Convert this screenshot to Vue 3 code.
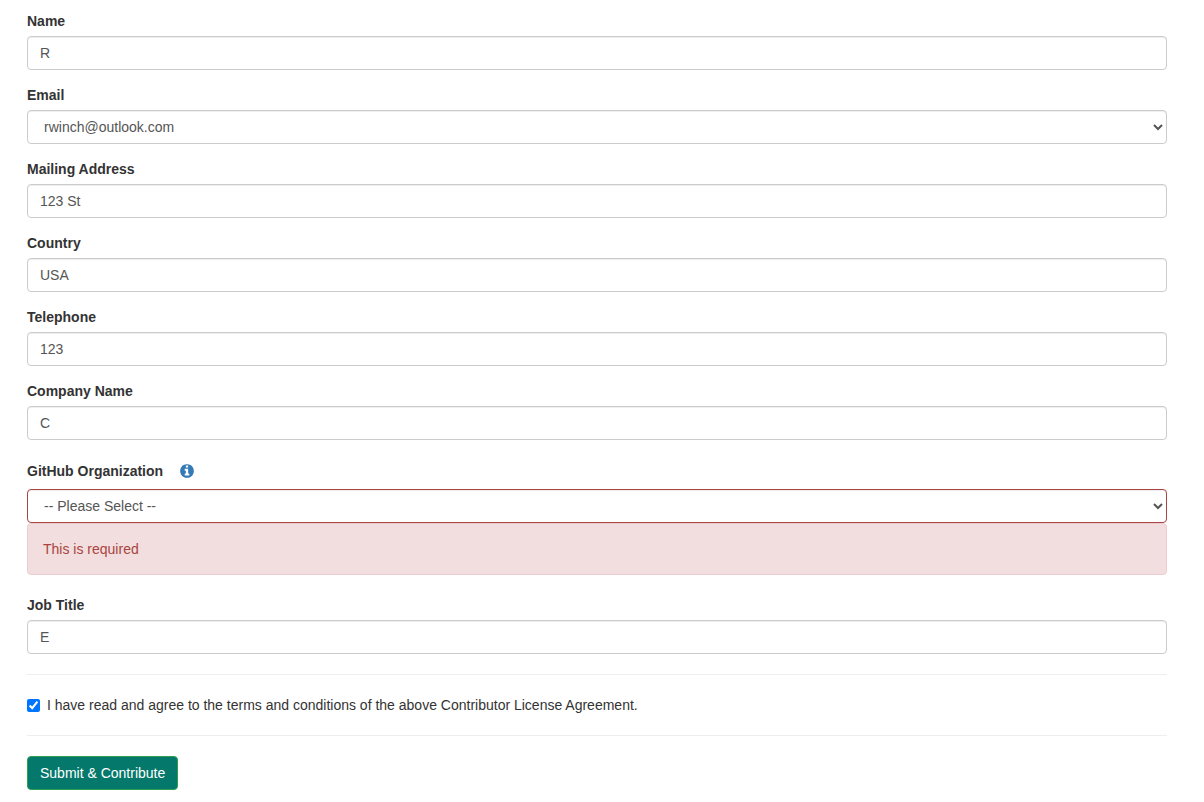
<template>
  <form class="cla-form" @submit.prevent>
    <div v-for="field in topFields" :key="field.label" class="form-group">
      <label class="form-label">{{ field.label }}</label>
      <select v-if="field.options" v-model="field.value" class="form-control">
        <option v-for="opt in field.options" :key="opt">{{ opt }}</option>
      </select>
      <input v-else v-model="field.value" class="form-control" type="text" />
    </div>

    <div class="org-group">
      <label class="form-label org-label">
        GitHub Organization
        <svg class="info-icon" viewBox="0 0 1792 1792" aria-hidden="true">
          <path d="M1152 1376v-160q0-14-9-23t-23-9h-96v-512q0-14-9-23t-23-9h-320q-14 0-23 9t-9 23v160q0 14 9 23t23 9h96v320h-96q-14 0-23 9t-9 23v160q0 14 9 23t23 9h448q14 0 23-9t9-23zm-128-896v-160q0-14-9-23t-23-9h-192q-14 0-23 9t-9 23v160q0 14 9 23t23 9h192q14 0 23-9t9-23zm640 416q0 209-103 385.500t-279.500 279.500-385.500 103-385.500-103-279.500-279.500-103-385.500 103-385.500 279.500-279.500 385.500-103 385.500 103 279.500 279.500 103 385.500z" />
        </svg>
      </label>
      <select v-model="organization" class="form-control invalid">
        <option>-- Please Select --</option>
      </select>
      <div class="alert">This is required</div>
    </div>

    <div class="form-group">
      <label class="form-label">Job Title</label>
      <input v-model="jobTitle" class="form-control" type="text" />
    </div>

    <hr />
    <label class="agree">
      <input v-model="agreed" type="checkbox" />
      <span>I have read and agree to the terms and conditions of the above Contributor License Agreement.</span>
    </label>
    <hr />

    <button class="submit-btn" type="submit">Submit &amp; Contribute</button>
  </form>
</template>

<script setup>
import { ref } from 'vue';

const topFields = ref([
  { label: 'Name', value: 'R' },
  { label: 'Email', value: 'rwinch@outlook.com', options: ['rwinch@outlook.com'] },
  { label: 'Mailing Address', value: '123 St' },
  { label: 'Country', value: 'USA' },
  { label: 'Telephone', value: '123' },
  { label: 'Company Name', value: 'C' },
]);

const organization = ref('-- Please Select --');
const jobTitle = ref('E');
const agreed = ref(true);
</script>

<style scoped>
.cla-form {
  padding: 11px 37px 12px 27px;
  font-family: "Liberation Sans", Arial, sans-serif;
  font-size: 14px;
  line-height: 20px;
  color: #333;
}

.form-group {
  margin-bottom: 15px;
}

.form-label {
  display: block;
  margin-bottom: 5px;
  font-weight: 700;
}

.form-control {
  display: block;
  box-sizing: border-box;
  width: 100%;
  height: 34px;
  padding: 6px 12px;
  font-family: inherit;
  font-size: 14px;
  line-height: 20px;
  color: #555;
  background-color: #fff;
  border: 1px solid #ccc;
  border-radius: 4px;
  box-shadow: inset 0 1px 1px rgba(0, 0, 0, 0.075);
}

.form-control.invalid {
  border-color: #a94442;
}

.org-label {
  display: flex;
  align-items: center;
  height: 24px;
  margin-bottom: 6px;
  padding-top: 4px;
}

.info-icon {
  width: 16px;
  height: 16px;
  margin-left: 16px;
  fill: #337ab7;
}

.alert {
  box-sizing: border-box;
  height: 52px;
  margin-bottom: 20px;
  padding: 15px;
  color: #a94442;
  background-color: #f2dede;
  border: 1px solid #ebccd1;
  border-radius: 4px;
}

hr {
  margin: 20px 0;
  border: 0;
  border-top: 1px solid #eee;
}

.agree {
  display: flex;
  align-items: center;
  height: 20px;
  margin: 0;
}

.agree input {
  width: 13px;
  height: 13px;
  margin: 0 7px 0 0;
}

.submit-btn {
  display: block;
  box-sizing: border-box;
  height: 34px;
  padding: 6px 12px;
  font-family: inherit;
  font-size: 14px;
  line-height: 20px;
  color: #fff;
  background-color: #03786b;
  border: 1px solid #2f9e52;
  border-radius: 4px;
}
</style>
